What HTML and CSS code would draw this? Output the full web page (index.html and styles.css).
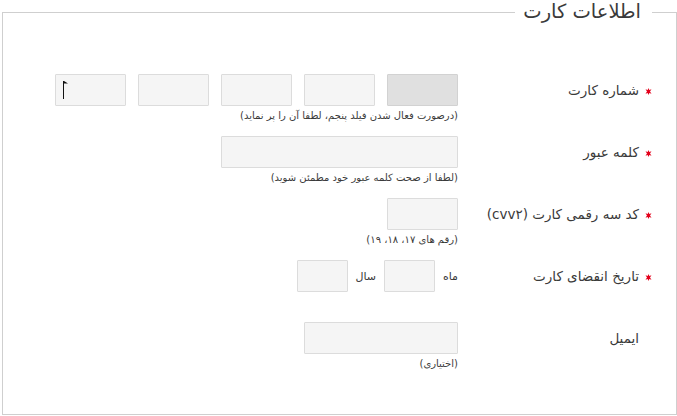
FILE: index.html
```html
<!DOCTYPE html>
<html lang="fa" dir="rtl">
<head>
<meta charset="utf-8">
<link rel="stylesheet" href="styles.css">
</head>
<body>
<fieldset class="card">
  <legend class="card-title">اطلاعات کارت</legend>

  <div class="row">
    <span class="star"><svg width="7" height="7" viewBox="0 0 7 7"><polygon points="3.5,0 4.3,2 6.5,1.2 5,3.5 6.5,5.8 4.3,5 3.5,7 2.7,5 0.5,5.8 2,3.5 0.5,1.2 2.7,2" fill="#e3001b"/></svg></span>
    <label class="label">شماره کارت</label>
    <div class="field">
      <div class="boxes">
        <input class="box box-dark" type="text">
        <input class="box" type="text">
        <input class="box" type="text">
        <input class="box" type="text">
        <span class="caret-wrap"><input class="box" type="text"><svg class="caret" width="6" height="18" viewBox="0 0 6 18"><rect x="0" y="0" width="1" height="18" fill="#111"/><polygon points="1,0 5,2.5 1,2.5" fill="#111"/></svg></span>
      </div>
      <div class="hint">(درصورت فعال شدن فیلد پنجم، لطفا آن را پر نماید)</div>
    </div>
  </div>

  <div class="row">
    <span class="star"><svg width="7" height="7" viewBox="0 0 7 7"><polygon points="3.5,0 4.3,2 6.5,1.2 5,3.5 6.5,5.8 4.3,5 3.5,7 2.7,5 0.5,5.8 2,3.5 0.5,1.2 2.7,2" fill="#e3001b"/></svg></span>
    <label class="label">کلمه عبور</label>
    <div class="field">
      <input class="box w-pass" type="password">
      <div class="hint">(لطفا از صحت کلمه عبور خود مطمئن شوید)</div>
    </div>
  </div>

  <div class="row">
    <span class="star"><svg width="7" height="7" viewBox="0 0 7 7"><polygon points="3.5,0 4.3,2 6.5,1.2 5,3.5 6.5,5.8 4.3,5 3.5,7 2.7,5 0.5,5.8 2,3.5 0.5,1.2 2.7,2" fill="#e3001b"/></svg></span>
    <label class="label">کد سه رقمی کارت (cvv۲)</label>
    <div class="field">
      <input class="box" type="text">
      <div class="hint">(رقم های ۱۷، ۱۸، ۱۹)</div>
    </div>
  </div>

  <div class="row">
    <span class="star"><svg width="7" height="7" viewBox="0 0 7 7"><polygon points="3.5,0 4.3,2 6.5,1.2 5,3.5 6.5,5.8 4.3,5 3.5,7 2.7,5 0.5,5.8 2,3.5 0.5,1.2 2.7,2" fill="#e3001b"/></svg></span>
    <label class="label">تاریخ انقضای کارت</label>
    <div class="field">
      <div class="date">
        <span class="unit">ماه</span>
        <input class="box w-date" type="text">
        <span class="unit unit-year">سال</span>
        <input class="box w-date" type="text">
      </div>
    </div>
  </div>

  <div class="row">
    <span class="star"></span>
    <label class="label">ایمیل</label>
    <div class="field">
      <input class="box w-mail" type="text">
      <div class="hint">(اختیاری)</div>
    </div>
  </div>
</fieldset>
</body>
</html>
```

FILE: styles.css
```css
html, body {
  margin: 0;
  padding: 0;
  background: #fff;
}
body {
  font-family: "DejaVu Sans", sans-serif;
  color: #3a3a3a;
}
.card {
  box-sizing: border-box;
  width: 675px;
  height: 415px;
  margin: 0;
  border: 1px solid #cfcfcf;
  padding: 50px 24px 0 0;
  min-width: 0;
}
.card-title {
  font-size: 19.5px;
  line-height: 24px;
  padding: 0 11px 0 8px;
  color: #3a3a3a;
}
.row {
  display: grid;
  grid-template-columns: 13px 181px auto;
  align-items: start;
  height: 62px;
}
.star {
  height: 32px;
  display: flex;
  align-items: center;
  justify-content: flex-start;
  padding-top: 2px;
  box-sizing: border-box;
}
.label {
  font-size: 13.5px;
  line-height: 32px;
  color: #3a3a3a;
}
.field {
  display: flex;
  flex-direction: column;
  align-items: flex-start;
}
.boxes {
  display: flex;
  gap: 12px;
}
.box {
  box-sizing: border-box;
  width: 71px;
  height: 32px;
  margin: 0;
  padding: 0 6px;
  border: 1px solid #dcdcdc;
  background: #f5f5f5;
  border-radius: 1px;
  font: inherit;
  outline: none;
}
.box-dark {
  background: #e0e0e0;
  border-color: #d2d2d2;
}
.caret-wrap {
  position: relative;
  display: block;
}
.caret {
  position: absolute;
  left: 8px;
  top: 7px;
}
.w-pass { width: 237px; }
.w-date { width: 51px; }
.w-mail { width: 154px; }
.hint {
  font-size: 10px;
  line-height: 14px;
  margin-top: 3px;
  color: #3a3a3a;
}
.date {
  display: flex;
  align-items: center;
}
.unit {
  font-size: 11px;
  margin-left: 8px;
}
.date .box { margin-left: 8px; }
.unit-year { margin-left: 7px; }
```
